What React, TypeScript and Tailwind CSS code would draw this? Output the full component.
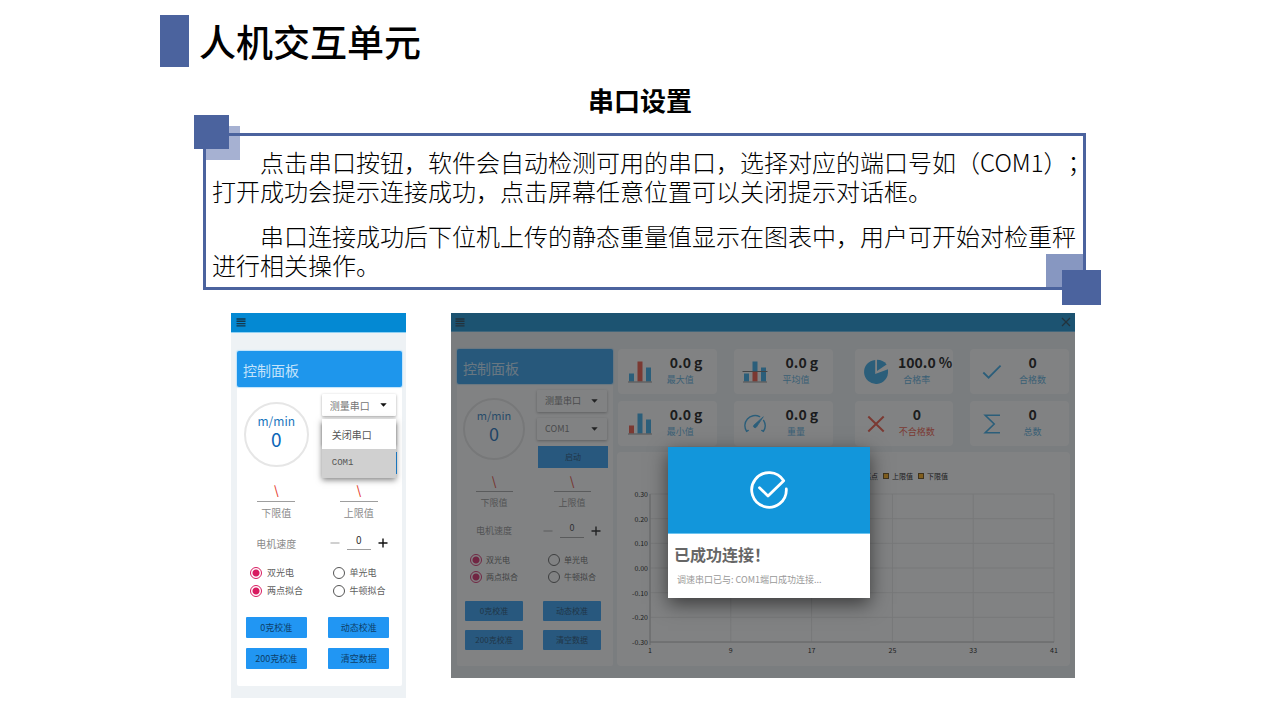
import React from "react";

type Size = "large" | "small";

const styles = {
  large: {
    head: "h-[36px]",
    top: "h-[95px]",
    dial: "w-[65px] h-[65px]",
    unit: "text-[12px] leading-[16px]",
    speed: "text-[19px] leading-[20px]",
    selects: "w-[74px] pt-[7px] gap-[7px]",
    text: "text-[10px]",
    small: "text-[9px]",
    field: "h-[20px] w-[38px]",
    motor: "mt-[12px]",
    radios: "mt-[9px]",
    radio: "h-[18px] gap-[5px]",
    actions: "mt-[17px] gap-y-[10px] pb-[17px]",
    action: "w-[61px] h-[21px]",
  },
  small: {
    head: "h-[35px]",
    top: "h-[89px]",
    dial: "w-[62px] h-[62px]",
    unit: "text-[11px] leading-[16px]",
    speed: "text-[18px] leading-[20px]",
    selects: "w-[70px] pt-[6px] gap-[6px]",
    text: "text-[9px]",
    small: "text-[8px]",
    field: "h-[19px] w-[37px]",
    motor: "mt-[10px]",
    radios: "mt-[8px]",
    radio: "h-[17px] gap-[4px]",
    actions: "mt-[16px] gap-y-[9px] pb-[16px]",
    action: "w-[58px] h-[20px]",
  },
};

function MenuIcon() {
  return (
    <svg width="10" height="9" viewBox="0 0 10 9" stroke="#12394f" strokeWidth="1.4">
      <path d="M0.5 1h9M0.5 3.3h9M0.5 5.6h9M0.5 7.9h9" />
    </svg>
  );
}

function Select({ label, value, size }: { label: string; value: string; size: Size }) {
  return (
    <div className="relative">
      <select
        aria-label={label}
        defaultValue={value}
        className={`block h-[22px] w-full appearance-none rounded-[1px] bg-white pl-[8px] text-[#757575] shadow-[0_1px_3px_rgba(0,0,0,0.35)] ${styles[size].text}`}
      >
        <option>{value}</option>
      </select>
      <svg className="pointer-events-none absolute right-[9px] top-[9px]" width="7" height="4" viewBox="0 0 7 4">
        <path d="M0.3 0.2h6.4L3.5 3.8z" fill="#111" />
      </svg>
    </div>
  );
}

function Limit({ id, label, size }: { id: string; label: string; size: Size }) {
  const s = styles[size];
  return (
    <div className="flex flex-col items-center">
      <input
        id={id}
        defaultValue="\"
        className={`border-b border-[#9e9e9e] pb-[4px] text-center text-[12px] font-medium text-[#e53a2b] ${s.field}`}
      />
      <label htmlFor={id} className={`mt-[5px] leading-[12px] text-[#8a8a8a] ${s.text}`}>
        {label}
      </label>
    </div>
  );
}

function Radio({ name, label, checked, size }: { name: string; label: string; checked?: boolean; size: Size }) {
  const s = styles[size];
  return (
    <label className={`flex items-center pl-[15px] whitespace-nowrap text-[#606060] ${s.radio} ${s.small}`}>
      <input
        type="radio"
        name={name}
        defaultChecked={checked}
        className="h-[12px] w-[12px] shrink-0 appearance-none rounded-full border border-[#555] bg-white checked:border-[#d81b60] checked:bg-[radial-gradient(circle,#d81b60_3px,#fff_4px)]"
      />
      {label}
    </label>
  );
}

function ControlPanel({ id, size, children }: { id: string; size: Size; children?: React.ReactNode }) {
  const s = styles[size];
  return (
    <section className="rounded-[2px] bg-white">
      <h3 className={`flex items-center rounded-[2px] bg-[#1e96ec] pl-[6px] pt-[3px] text-[14px] text-[#c4e3fb] shadow-[0_0_1px_1px_#bfe3fb] ${s.head}`}>
        控制面板
      </h3>
      <div className="mr-[2px] -ml-[2px]">
        <div className={`grid grid-cols-2 ${s.top}`}>
          <div className="flex items-center justify-center">
            <div className={`flex flex-col items-center justify-center rounded-full border-[2px] border-[#e6e6e6] pb-[7px] ${s.dial}`}>
              <span className={`text-[#1a76bd] ${s.unit}`}>m/min</span>
              <span className={`text-[#0b66b8] ${s.speed}`}>0</span>
            </div>
          </div>
          <div className="flex justify-center">
            <div className={`flex flex-col ${s.selects}`}>
              <div className="relative">
                <Select label="串口类型" value="测量串口" size={size} />
                {children}
              </div>
              <Select label="端口号" value="COM1" size={size} />
              <button className={`relative left-px h-[22px] w-full shrink-0 bg-[#2196f3] text-[#0d3f69] ${s.small}`}>启动</button>
            </div>
          </div>
        </div>

        <div className="grid grid-cols-2">
          <Limit id={`${id}-low`} label="下限值" size={size} />
          <Limit id={`${id}-high`} label="上限值" size={size} />
        </div>

        <div className={`grid h-[24px] grid-cols-2 items-center ${s.motor}`}>
          <label htmlFor={`${id}-motor`} className={`text-center text-[#8a8a8a] ${s.text}`}>
            电机速度
          </label>
          <div className="flex items-center justify-center gap-[7px]">
            <button aria-label="减速">
              <svg width="10" height="10" viewBox="0 0 10 10" stroke="#b0b0b0" strokeWidth="1.2">
                <path d="M0.5 5h9" />
              </svg>
            </button>
            <input
              id={`${id}-motor`}
              defaultValue="0"
              className={`mb-[5px] h-[18px] w-[24px] border-b border-[#9e9e9e] pb-[2px] text-center text-[#333] ${s.text}`}
            />
            <button aria-label="加速">
              <svg width="10" height="10" viewBox="0 0 10 10" stroke="#111" strokeWidth="1.4">
                <path d="M0.5 5h9M5 0.5v9" />
              </svg>
            </button>
          </div>
        </div>

        <div className={`grid grid-cols-2 ${s.radios}`}>
          <Radio name={`${id}-sensor`} label="双光电" checked size={size} />
          <Radio name={`${id}-sensor`} label="单光电" size={size} />
          <Radio name={`${id}-fit`} label="两点拟合" checked size={size} />
          <Radio name={`${id}-fit`} label="牛顿拟合" size={size} />
        </div>

        <div className={`grid grid-cols-2 justify-items-center ${s.actions}`}>
          {["0克校准", "动态校准", "200克校准", "清空数据"].map((t) => (
            <button key={t} className={`rounded-[1px] bg-[#2196f3] whitespace-nowrap text-[#0d3f69] ${s.action} ${s.small}`}>
              {t}
            </button>
          ))}
        </div>
      </div>
    </section>
  );
}

function Bars({ heights, red, line }: { heights: number[]; red: number; line?: boolean }) {
  return (
    <svg width="26" height="22" viewBox="0 0 26 22">
      {heights.map((h, i) => (
        <rect key={i} x={2 + i * 8.5} y={20.5 - h} width="5" height={h} fill={i === red ? "#f04a35" : "#2aa5e8"} />
      ))}
      {line && <rect x="10.5" y="0.5" width="5" height="10" fill="#2aa5e8" />}
      {line && <path d="M0.5 10.5h25" stroke="#666" strokeWidth="1" />}
      <path d="M1 21h24" stroke="#888" strokeWidth="1" />
    </svg>
  );
}

const gaugeIcon = (
  <svg width="24" height="20" viewBox="0 0 24 20" fill="none" stroke="#2aa5e8" strokeWidth="1.4" strokeLinecap="round">
    <path d="M3.6 17.4A10.2 10.2 0 0 1 16.6 2.6M20.6 6.4A10.2 10.2 0 0 1 20.4 17.4M3.6 17.4l1.6-1M20.4 17.4l-1.6-1" />
    <path d="M20 3L10.8 11.2a1.6 1.6 0 0 0 2.4 2.1z" fill="#2aa5e8" strokeWidth="0.8" />
  </svg>
);
const pieIcon = (
  <svg width="26" height="26" viewBox="0 0 26 26" fill="#2aa5e8">
    <path d="M12.2 1A12 12 0 1 0 25 12V10.2L12.2 15z" />
    <path d="M14 0.8V12l9.6-6.6A12 12 0 0 0 14 0.8z" />
  </svg>
);
const checkIcon = (
  <svg width="20" height="16" viewBox="0 0 20 16" fill="none" stroke="#2aa5e8" strokeWidth="1.8">
    <path d="M1.3 8.5l5.3 5.2L18.6 1.7" />
  </svg>
);
const crossIcon = (
  <svg width="18" height="18" viewBox="0 0 18 18" fill="none" stroke="#f04a35" strokeWidth="2">
    <path d="M1.3 1.5l15.4 15M16.7 1.5L1.3 16.5" />
  </svg>
);
const sigmaIcon = (
  <svg width="18" height="20" viewBox="0 0 18 20" fill="none" stroke="#2aa5e8" strokeWidth="1.6">
    <path d="M17 1.2H2.2l9 8.8-9 8.8H17" />
  </svg>
);

interface StatProps {
  icon: React.ReactNode;
  value: string;
  unit?: string;
  label: string;
  danger?: boolean;
}

function Stat({ icon, value, unit, label, danger }: StatProps) {
  return (
    <div className="flex h-[45px] rounded-[4px] bg-white">
      <div className="flex w-[43px] shrink-0 items-center justify-center">{icon}</div>
      <div className="mr-[17px] flex flex-1 flex-col items-center pt-[4px] whitespace-nowrap">
        <div className="flex text-[14px] leading-[18px] font-bold text-black">
          {value}
          {unit && <span className="ml-[3px] -mr-[3px] w-0">{unit}</span>}
        </div>
        <div className={`mt-[2px] text-[9px] leading-[14px] ${danger ? "text-[#f04a35]" : "text-[#4da9dc]"}`}>{label}</div>
      </div>
    </div>
  );
}

const weightStats: StatProps[] = [
  { icon: <Bars heights={[8, 20, 14]} red={1} />, value: "0.0", unit: "g", label: "最大值" },
  { icon: <Bars heights={[8, 10, 14]} red={1} line />, value: "0.0", unit: "g", label: "平均值" },
  { icon: <Bars heights={[8, 20, 14]} red={0} />, value: "0.0", unit: "g", label: "最小值" },
  { icon: gaugeIcon, value: "0.0", unit: "g", label: "重量" },
];
const countStats: StatProps[] = [
  { icon: pieIcon, value: "100.0", unit: "%", label: "合格率" },
  { icon: checkIcon, value: "0", label: "合格数" },
  { icon: crossIcon, value: "0", label: "不合格数", danger: true },
  { icon: sigmaIcon, value: "0", label: "总数" },
];

function Chart() {
  const rows = ["0.30", "0.20", "0.10", "0.00", "-0.10", "-0.20", "-0.30"];
  const cols = ["1", "9", "17", "25", "33", "41"];
  return (
    <div className="mt-[6px] flex-1 rounded-[4px] bg-white pt-[19px] text-[7px] leading-[10px] text-black">
      <div className="flex justify-end gap-[5px] pr-[122px]">
        {["高点", "上限值", "下限值"].map((t) => (
          <span key={t} className="flex items-center gap-[3px]">
            <i className="h-[6px] w-[6px] border border-[#5b3b00] bg-[#ffa500]" />
            {t}
          </span>
        ))}
      </div>
      <div className="mt-[13px] flex h-[148px]">
        <div className="flex w-[31px] flex-col items-end justify-between">
          {rows.map((r) => (
            <span key={r} className="flex h-0 items-center">
              {r}
            </span>
          ))}
        </div>
        <svg className="mr-4 ml-[2px] h-full flex-1 overflow-visible" stroke="#e6e6e6">
          {rows.map((r, i) => (
            <line key={r} x1="0" x2="100%" y1={`${(i * 100) / 6}%`} y2={`${(i * 100) / 6}%`} />
          ))}
          {cols.map((c, i) => (
            <line key={c} y1="0" y2="100%" x1={`${i * 20}%`} x2={`${i * 20}%`} />
          ))}
          <path d="M0 0v151" stroke="#b8b8b8" />
          <line x1="0" x2="100%" y1="100%" y2="100%" stroke="#b8b8b8" />
        </svg>
      </div>
      <div className="mt-[3px] mr-4 ml-[33px] flex justify-between">
        {cols.map((c) => (
          <span key={c} className="flex w-0 justify-center">
            {c}
          </span>
        ))}
      </div>
    </div>
  );
}

function SuccessDialog() {
  return (
    <div role="dialog" aria-labelledby="dialog-title" className="absolute top-[134px] left-[217px] w-[202px] bg-white shadow-[0_6px_18px_rgba(0,0,0,0.55)]">
      <div className="flex h-[87px] items-center justify-center border-b border-[#6cc4f0] bg-[#1296db]">
        <svg width="40" height="40" viewBox="0 0 40 40" fill="none" stroke="#fff" strokeWidth="2.8" strokeLinecap="round" strokeLinejoin="round">
          <path d="M37.3 19A17.3 17.3 0 1 1 34.7 10.8L19 26 10.5 17.7" />
        </svg>
      </div>
      <div className="h-[64px] px-[6px] pt-[10px]">
        <h3 id="dialog-title" className="text-[16px] leading-[20px] font-bold text-[#666]">
          已成功连接！
        </h3>
        <p className="mt-[9px] pl-[3px] text-[9px] leading-[14px] whitespace-nowrap text-[#999]">调速串口已与: COM1端口成功连接...</p>
      </div>
    </div>
  );
}

export default function App() {
  return (
    <main className="min-h-screen bg-white px-40 pt-[15px] pb-[22px] font-['Noto_Sans_CJK_SC',sans-serif] text-black">
      <header className="flex h-[52px] items-center gap-[10px]">
        <span className="h-full w-[29px] bg-[#4b639e]" />
        <h1 className="text-[37px] leading-[46px] font-medium">人机交互单元</h1>
      </header>
      <h2 className="mt-[16px] text-center text-[26px] leading-[34px] font-bold">串口设置</h2>

      <div className="relative z-0 mt-[16px] mr-[34px] ml-[43px]">
        <span className="absolute -top-[7px] left-[2px] -z-10 h-[34px] w-[35px] bg-[#a6b1d2]" />
        <span className="absolute right-[3px] bottom-[3px] -z-10 h-[33px] w-[37px] bg-[#8797c1]" />
        <span className="absolute -top-[18px] -left-[9px] z-10 h-[34px] w-[35px] bg-[#4b639e]" />
        <span className="absolute -right-[15px] -bottom-[15px] z-10 h-[35px] w-[39px] bg-[#4b639e]" />
        <div className="border-[3px] border-[#4b639e] pt-[11px] pb-[8px] pl-[6px] text-[24px] leading-[29px] font-light whitespace-nowrap [text-spacing-trim:space-all]">
          <p className="indent-[48px]">
            点击串口按钮，软件会自动检测可用的串口，选择对应的端口号如（COM1）；
            <br />
            打开成功会提示连接成功，点击屏幕任意位置可以关闭提示对话框。
          </p>
          <p className="mt-[16px] indent-[48px]">
            串口连接成功后下位机上传的静态重量值显示在图表中，用户可开始对检重秤
            <br />
            进行相关操作。
          </p>
        </div>
      </div>

      <div className="mt-[23px] mr-[45px] ml-[71px] flex items-start gap-[45px]">
        <div className="w-[175px] shrink-0 bg-[#eef2f5] pb-[12px]">
          <div className="flex h-[20px] items-center border-b border-[#8fd0f3] bg-[#0489d3] pl-[5px]">
            <button aria-label="菜单">
              <MenuIcon />
            </button>
          </div>
          <div className="mt-[18px] mr-[4px] ml-[6px]">
            <ControlPanel id="phone" size="large">
              <ul className="absolute top-[25px] left-0 z-10 w-full bg-white text-[10px] text-[#555] shadow-[0_2px_6px_rgba(0,0,0,0.5)]">
                <li>
                  <button className="h-[30px] w-full pl-[10px] text-left">关闭串口</button>
                </li>
                <li>
                  <button className="h-[29px] w-full bg-[#d0d0d0] pl-[10px] text-left font-['Liberation_Mono',monospace] text-[9px]">COM1</button>
                </li>
              </ul>
            </ControlPanel>
          </div>
        </div>

        <div className="relative min-w-0 flex-1 bg-[#eef2f5] pb-[12px]">
          <div className="flex h-[19px] items-center justify-between border-b border-[#5cb8ea] bg-[#0489d3] pr-[4px] pl-[4px]">
            <button aria-label="菜单">
              <MenuIcon />
            </button>
            <button aria-label="关闭">
              <svg width="10" height="10" viewBox="0 0 10 10" stroke="#12394f" strokeWidth="1.3">
                <path d="M1 1l8 8M9 1L1 9" />
              </svg>
            </button>
          </div>
          <div className="mt-[17px] flex gap-[4px] pr-[5px] pl-[6px]">
            <div className="w-[156px] shrink-0">
              <ControlPanel id="desktop" size="small" />
            </div>
            <div className="flex min-w-0 flex-1 flex-col">
              <div className="flex gap-[22px] px-px">
                {[weightStats, countStats].map((group, i) => (
                  <div key={i} className="grid flex-1 grid-cols-2 gap-x-[17px] gap-y-[7px]">
                    {group.map((st) => (
                      <Stat key={st.label} {...st} />
                    ))}
                  </div>
                ))}
              </div>
              <Chart />
            </div>
          </div>
          <div className="absolute inset-0 bg-[rgba(45,47,48,0.6)]" />
          <SuccessDialog />
        </div>
      </div>
    </main>
  );
}
